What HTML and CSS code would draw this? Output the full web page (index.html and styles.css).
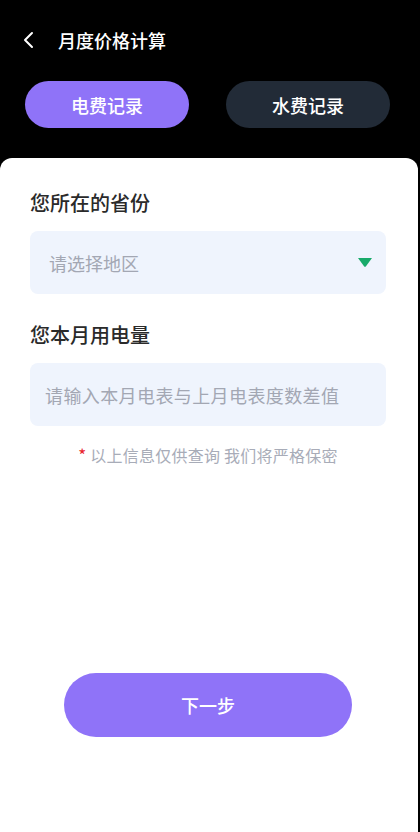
FILE: index.html
```html
<!DOCTYPE html>
<html lang="zh-CN">
<head>
  <meta charset="UTF-8" />
  <meta name="viewport" content="width=device-width, initial-scale=1.0" />
  <title>月度价格计算</title>
  <link rel="stylesheet" href="styles.css">
</head>
<body>
  <div class="page">
    <div class="header">
      <a class="back" href="#">
        <svg width="12" height="18" viewBox="0 0 12 18">
          <path d="M10 2 L3 9 L10 16" fill="none" stroke="#fff" stroke-width="2" stroke-linecap="round" stroke-linejoin="round" />
        </svg>
      </a>
      <h1>月度价格计算</h1>
    </div>

    <div class="tabs">
      <button class="tab active">电费记录</button>
      <button class="tab">水费记录</button>
    </div>

    <div class="card">
      <div class="field">
        <label>您所在的省份</label>
        <div class="select">
          <span>请选择地区</span>
          <svg width="14" height="9" viewBox="0 0 14 9">
            <path d="M0 0 H14 L7.8 8.4 Q7 9.2 6.2 8.4 Z" fill="#18aa6a" />
          </svg>
        </div>
      </div>

      <div class="field">
        <label>您本月用电量</label>
        <input class="input" type="text" placeholder="请输入本月电表与上月电表度数差值" />
      </div>

      <p class="note"><span class="star">*</span> 以上信息仅供查询 我们将严格保密</p>

      <button class="next">下一步</button>
    </div>
  </div>
</body>
</html>
```

FILE: styles.css
```css
* {
  margin: 0;
  padding: 0;
  box-sizing: border-box;
  font-family: "Noto Sans CJK SC", "Noto Sans", sans-serif;
}

body {
  background: #000;
  width: 420px;
  height: 832px;
  overflow: hidden;
}

.page {
  height: 832px;
  display: flex;
  flex-direction: column;
}

.header {
  height: 81px;
  display: flex;
  align-items: center;
  padding: 0 0 2px 22px;
}

.back {
  display: flex;
  width: 12px;
  height: 18px;
}

.header h1 {
  margin-left: 24px;
  color: #fff;
  font-size: 18px;
  font-weight: 500;
}

.tabs {
  display: flex;
  justify-content: space-between;
  padding: 0 30px 0 25px;
}

.tab {
  width: 164px;
  height: 47px;
  border: none;
  border-radius: 24px;
  background: #222b37;
  color: #fff;
  font-size: 18px;
  font-weight: 500;
}

.tab.active {
  background: #8f73f8;
}

.card {
  flex: 1;
  margin: 30px 2px 0 0;
  background: #fff;
  border-radius: 12px 12px 0 0;
  padding: 30px 32px 0 30px;
  display: flex;
  flex-direction: column;
}

.field label {
  display: block;
  font-size: 20px;
  font-weight: 500;
  color: #2a2a2a;
  line-height: 30px;
  margin-bottom: 13px;
}

.select,
.input {
  width: 100%;
  height: 63px;
  border-radius: 8px;
  background: #eff4fd;
  border: none;
  outline: none;
}

.select {
  display: flex;
  align-items: center;
  justify-content: space-between;
  padding: 0 14px 0 19px;
  margin-bottom: 26px;
}

.select span {
  font-size: 18px;
  color: #a3a7b3;
}

.input {
  padding: 0 15px;
  font-size: 18px;
  letter-spacing: 0.4px;
}

.input::placeholder {
  color: #a3a7b3;
}

.note {
  margin-top: 17px;
  text-align: center;
  font-size: 16px;
  letter-spacing: 0.25px;
  color: #a8acb8;
  line-height: 24px;
}

.note .star {
  color: #e8232d;
  font-size: 17px;
}

.next {
  align-self: center;
  margin-top: 206px;
  width: 288px;
  height: 64px;
  border: none;
  border-radius: 32px;
  background: #8f73f8;
  color: #fff;
  font-size: 18px;
  font-weight: 500;
}
```
